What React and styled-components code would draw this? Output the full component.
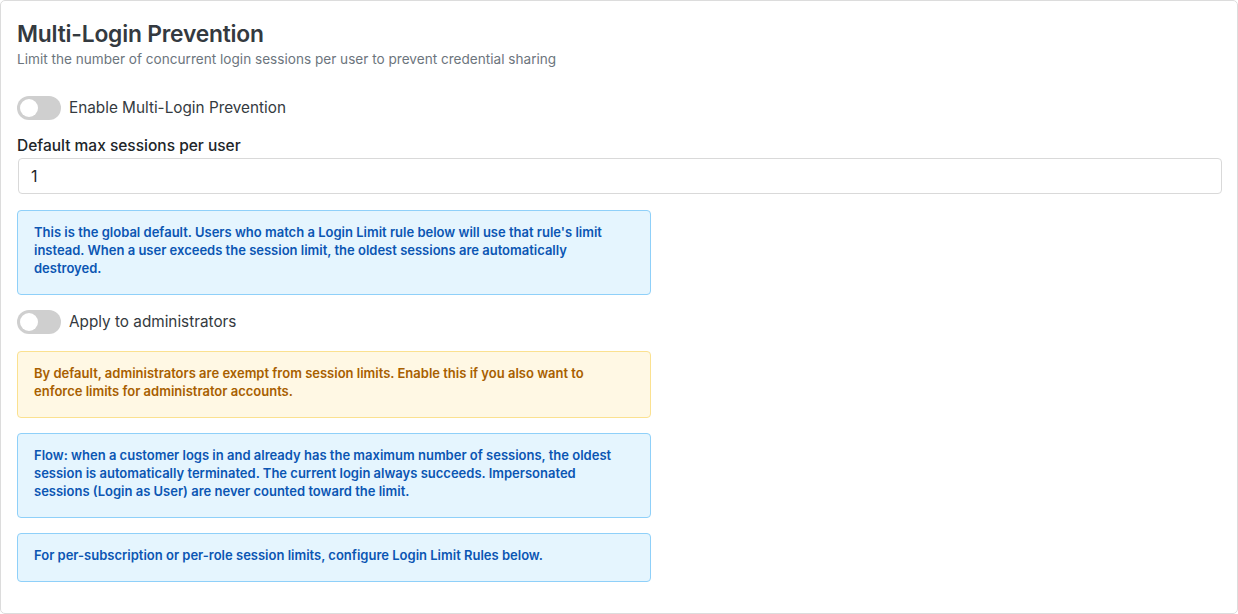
import styled, { createGlobalStyle } from 'styled-components';

const GlobalStyle = createGlobalStyle`
    html, body {
        margin: 0;
        padding: 0;
        background: #ffffff;
    }
    body {
        font-family: Inter, "Noto Sans", "Liberation Sans", sans-serif;
        -webkit-font-smoothing: antialiased;
    }
`

const Card = styled.div`
    box-sizing: border-box;
    width: 1238px;
    height: 614px;
    border: 1px solid #dcdcdc;
    border-radius: 5px;
    background: #ffffff;
    padding: 19px 15px 0 16px;
    display: flex;
    flex-direction: column;
`

const Title = styled.h2`
    margin: 0;
    font-size: 22.8px;
    font-weight: 600;
    line-height: 28px;
    color: #343a40;
    letter-spacing: -0.2px;
`

const Subtitle = styled.p`
    margin: 2px 0 0 0;
    font-size: 13.6px;
    line-height: 18px;
    color: #6c757d;
`

const ToggleRow = styled.label`
    display: flex;
    align-items: center;
    gap: 8px;
    margin-top: ${props => props.$top}px;
    font-size: 15.3px;
    color: #343a40;
    line-height: 24px;
    cursor: pointer;
`

const Track = styled.span`
    position: relative;
    width: 44px;
    height: 24px;
    border-radius: 12px;
    background: ${props => props.$on ? '#0d6efd' : '#cfcfcf'};
    flex-shrink: 0;
    &::after {
        content: '';
        position: absolute;
        top: 3px;
        left: ${props => props.$on ? '23px' : '3px'};
        width: 18px;
        height: 18px;
        border-radius: 50%;
        background: #ffffff;
    }
`

const FieldLabel = styled.div`
    margin-top: 15px;
    font-size: 15.5px;
    font-weight: 500;
    line-height: 22px;
    color: #212529;
`

const Input = styled.input`
    box-sizing: border-box;
    margin-top: 1px;
    margin-left: 1px;
    width: calc(100% - 1px);
    height: 36px;
    padding: 0 12px;
    border: 1px solid #d9d9d9;
    border-radius: 4px;
    font-family: inherit;
    font-size: 16px;
    color: #212529;
    outline: none;
`

const tones = {
    info: { bg: '#e5f5fe', border: '#8fd0f9', color: '#0b56b3' },
    warn: { bg: '#fff8e4', border: '#fbe190', color: '#a85f00' },
}

const Notice = styled.div`
    box-sizing: border-box;
    width: 634px;
    margin-top: ${props => props.$top}px;
    padding: 12px 16px 17px 16px;
    border: 1px solid ${props => tones[props.$tone].border};
    border-radius: 4px;
    background: ${props => tones[props.$tone].bg};
    color: ${props => tones[props.$tone].color};
    font-size: 13px;
    font-weight: 600;
    line-height: 18px;
`

export default function App() {
    return (
        <>
            <GlobalStyle />
            <Card>
                <Title>Multi-Login Prevention</Title>
                <Subtitle>Limit the number of concurrent login sessions per user to prevent credential sharing</Subtitle>

                <ToggleRow $top={28}>
                    <Track $on={false} />
                    Enable Multi-Login Prevention
                </ToggleRow>

                <FieldLabel>Default max sessions per user</FieldLabel>
                <Input type="number" defaultValue="1" />

                <Notice $tone="info" $top={16}>
                    This is the global default. Users who match a Login Limit rule below will use that rule's limit instead. When a user exceeds the session limit, the oldest sessions are automatically destroyed.
                </Notice>

                <ToggleRow $top={15}>
                    <Track $on={false} />
                    Apply to administrators
                </ToggleRow>

                <Notice $tone="warn" $top={17}>
                    By default, administrators are exempt from session limits. Enable this if you also want to enforce limits for administrator accounts.
                </Notice>

                <Notice $tone="info" $top={15}>
                    Flow: when a customer logs in and already has the maximum number of sessions, the oldest session is automatically terminated. The current login always succeeds. Impersonated sessions (Login as User) are never counted toward the limit.
                </Notice>

                <Notice $tone="info" $top={15}>
                    For per-subscription or per-role session limits, configure Login Limit Rules below.
                </Notice>
            </Card>
        </>
    );
}
